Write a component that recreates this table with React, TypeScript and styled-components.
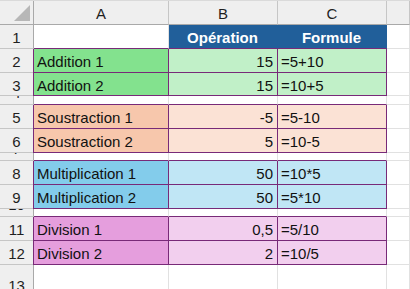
import React from 'react';
import styled, { createGlobalStyle } from 'styled-components';

const GlobalStyle = createGlobalStyle`
    html, body {
        margin: 0;
        padding: 0;
        background: #ffffff;
    }
    body {
        font-family: "Liberation Sans", Arial, sans-serif;
        overflow: hidden;
    }
`;

const GRID = '#e1e1e1';
const HEAD_LINE = '#c6c6c6';
const PURPLE = '#782a78';
const BLUE = '#215f9a';

const Page = styled.div`
    width: 410px;
    height: 289px;
    display: flex;
    flex-direction: column;
    overflow: hidden;
`;

const TopStrip = styled.div`
    height: 8px;
    background: #f3f3f3;
    border-bottom: 1px solid #dadada;
    box-sizing: border-box;
`;

const Sheet = styled.div`
    display: grid;
    grid-template-columns: 34px 135px 109px 109px 1fr;
    grid-template-rows: 24px 24px 24px 23px 9px 24px 24px 8px 24px 24px 8px 24px 24px 40px;
`;

const Corner = styled.div`
    background: #efefef;
    border-right: 1px solid #a9a9a9;
    border-bottom: 1px solid #a9a9a9;
    box-sizing: border-box;
    display: flex;
    align-items: flex-end;
    justify-content: flex-end;
    padding: 0 3px 3px 0;
`;

const ColHead = styled.div`
    background: #efefef;
    border-right: 1px solid ${HEAD_LINE};
    border-bottom: 1px solid #a9a9a9;
    box-sizing: border-box;
    display: flex;
    align-items: center;
    justify-content: center;
    font-size: 15px;
    color: #1f1f1f;
    padding-top: 1px;
`;

const RowHead = styled.div<{ $short?: boolean }>`
    background: #efefef;
    border-right: 1px solid #a9a9a9;
    border-bottom: 1px solid ${HEAD_LINE};
    box-sizing: border-box;
    display: flex;
    align-items: ${({ $short }) => ($short ? 'flex-end' : 'center')};
    justify-content: center;
    font-size: 15px;
    line-height: 17px;
    color: #1f1f1f;
    padding: ${({ $short }) => ($short ? '0 0 3px 0' : '2px 0 0 0')};
    overflow: hidden;
`;

type CellProps = {
    $bg?: string;
    $align?: 'left' | 'right' | 'center';
    $bottom?: string;
    $right?: string;
    $left?: boolean;
    $bold?: boolean;
    $color?: string;
};

const Cell = styled.div<CellProps>`
    background: ${({ $bg }) => $bg || '#ffffff'};
    border-right: 1px solid ${({ $right }) => $right || GRID};
    border-bottom: 1px solid ${({ $bottom }) => $bottom || GRID};
    box-shadow: ${({ $left }) => ($left ? `-1px 0 0 ${PURPLE}` : 'none')};
    box-sizing: border-box;
    display: flex;
    align-items: center;
    justify-content: ${({ $align }) =>
        $align === 'right' ? 'flex-end' : $align === 'center' ? 'center' : 'flex-start'};
    padding: 2px 4px 0 3px;
    font-size: 15px;
    font-weight: ${({ $bold }) => ($bold ? 700 : 400)};
    color: ${({ $color }) => $color || '#111111'};
    white-space: nowrap;
    overflow: hidden;
`;

type Group = {
    first: number;
    dark: string;
    light: string;
    items: [string, string, string][];
};

const groups: Group[] = [
    { first: 2, dark: '#83e28e', light: '#c1f0c8', items: [['Addition 1', '15', '=5+10'], ['Addition 2', '15', '=10+5']] },
    { first: 5, dark: '#f7c7ac', light: '#fbe2d5', items: [['Soustraction 1', '-5', '=5-10'], ['Soustraction 2', '5', '=10-5']] },
    { first: 8, dark: '#83cceb', light: '#c0e6f5', items: [['Multiplication 1', '50', '=10*5'], ['Multiplication 2', '50', '=5*10']] },
    { first: 11, dark: '#e59edd', light: '#f2cfee', items: [['Division 1', '0,5', '=5/10'], ['Division 2', '2', '=10/5']] },
];

const CornerMark = () => (
    <svg width="16" height="16" viewBox="0 0 16 16">
        <polygon points="16,0 16,16 0,16" fill="#b7b7b7" />
    </svg>
);

const SpacerRow = ({ n }: { n: number }) => (
    <>
        <RowHead $short>{n}</RowHead>
        <Cell $bottom={PURPLE} />
        <Cell $bottom={PURPLE} />
        <Cell $bottom={PURPLE} />
        <Cell />
    </>
);

const EmptyRow = ({ n }: { n: number }) => (
    <>
        <RowHead>{n}</RowHead>
        <Cell />
        <Cell />
        <Cell />
        <Cell />
    </>
);

const App = () => {
    return (
        <Page>
            <GlobalStyle />
            <TopStrip />
            <Sheet>
                <Corner>
                    <CornerMark />
                </Corner>
                <ColHead>A</ColHead>
                <ColHead>B</ColHead>
                <ColHead>C</ColHead>
                <ColHead />

                <RowHead>1</RowHead>
                <Cell $bottom={PURPLE} />
                <Cell $bg={BLUE} $align="center" $bold $color="#ffffff" $right={BLUE} $bottom={PURPLE}>
                    Opération
                </Cell>
                <Cell $bg={BLUE} $align="center" $bold $color="#ffffff" $right={BLUE} $bottom={PURPLE}>
                    Formule
                </Cell>
                <Cell />

                {groups.map((g, gi) => (
                    <React.Fragment key={g.first}>
                        {g.items.map(([label, value, formula], i) => (
                            <React.Fragment key={label}>
                                <RowHead>{g.first + i}</RowHead>
                                <Cell $bg={g.dark} $left $right={PURPLE} $bottom={PURPLE}>
                                    {label}
                                </Cell>
                                <Cell $bg={g.light} $align="right" $right={PURPLE} $bottom={PURPLE}>
                                    {value}
                                </Cell>
                                <Cell $bg={g.light} $right={PURPLE} $bottom={PURPLE}>
                                    {formula}
                                </Cell>
                                <Cell />
                            </React.Fragment>
                        ))}
                        {gi < groups.length - 1 ? <SpacerRow n={g.first + 2} /> : <EmptyRow n={g.first + 2} />}
                    </React.Fragment>
                ))}
            </Sheet>
        </Page>
    );
};

export default App;
